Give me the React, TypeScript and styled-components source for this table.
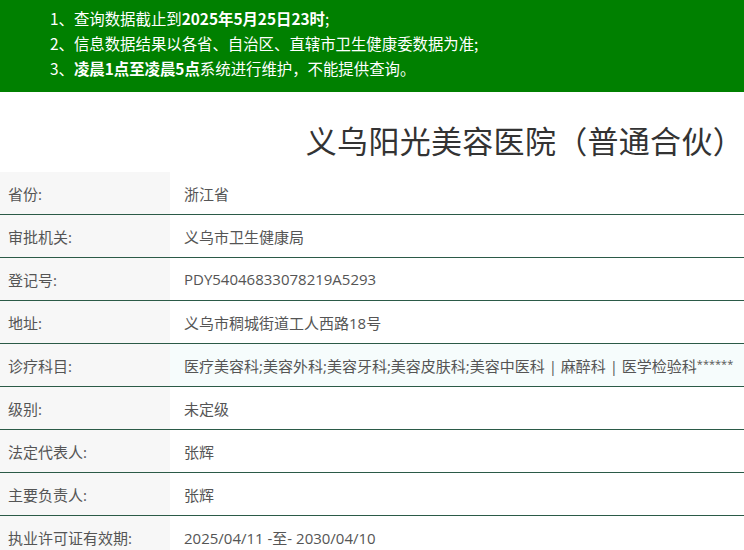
import React from "react";
import styled, { createGlobalStyle } from "styled-components";

const Global = createGlobalStyle`
  html, body { margin: 0; padding: 0; background: #fff; }
  body { font-family: "Open Sans", "Noto Sans CJK SC", sans-serif; }
`;

const Page = styled.div`
  width: 744px;
  height: 550px;
  overflow: hidden;
`;

const Notice = styled.div`
  background: #008000;
  height: 92px;
  box-sizing: border-box;
  padding: 6px 0 0 50px;
  color: #fff;
  font-size: 15.4px;
  line-height: 25px;
  font-family: "Noto Sans CJK SC", sans-serif;
`;

const NoticeLine = styled.div`
  white-space: nowrap;
`;

const Title = styled.h1`
  margin: 0;
  height: 80px;
  box-sizing: border-box;
  padding: 28px 0 0 0;
  text-align: right;
  font-size: 31px;
  font-weight: 400;
  line-height: 40px;
  letter-spacing: 0.3px;
  color: #333;
  font-family: "Noto Sans CJK SC", sans-serif;
`;

const Table = styled.div`
  display: grid;
  grid-template-columns: 170px 1fr;
`;

const Label = styled.div`
  background: #f7f7f7;
  height: 42px;
  border-bottom: 1px solid #2b5a47;
  padding-left: 8px;
  display: flex;
  align-items: center;
  font-size: 15px;
  color: #555;
  font-family: "Open Sans", "Noto Sans CJK SC", sans-serif;
`;

const Value = styled(Label)<{ $tint?: boolean }>`
  background: ${(p) => (p.$tint ? "#f6fcfc" : "#fff")};
  padding-left: 14px;
  white-space: nowrap;
  overflow: hidden;
`;

const Stars = styled.span`
  font-size: 11px;
  position: relative;
  top: -2px;
`;

const rows: { k: string; v: React.ReactNode; tint?: boolean }[] = [
  { k: "省份:", v: "浙江省" },
  { k: "审批机关:", v: "义乌市卫生健康局" },
  { k: "登记号:", v: "PDY54046833078219A5293" },
  { k: "地址:", v: "义乌市稠城街道工人西路18号" },
  {
    k: "诊疗科目:",
    v: (
      <>
        医疗美容科;美容外科;美容牙科;美容皮肤科;美容中医科 | 麻醉科 | 医学检验科<Stars>******</Stars>
      </>
    ),
    tint: true,
  },
  { k: "级别:", v: "未定级" },
  { k: "法定代表人:", v: "张辉" },
  { k: "主要负责人:", v: "张辉" },
  { k: "执业许可证有效期:", v: "2025/04/11 -至- 2030/04/10" },
];

export default function App() {
  return (
    <Page>
      <Global />
      <Notice>
        <NoticeLine>
          1、查询数据截止到<b>2025年5月25日23时</b>;
        </NoticeLine>
        <NoticeLine>2、信息数据结果以各省、自治区、直辖市卫生健康委数据为准;</NoticeLine>
        <NoticeLine>
          3、<b>凌晨1点至凌晨5点</b>系统进行维护，不能提供查询。
        </NoticeLine>
      </Notice>
      <Title>义乌阳光美容医院（普通合伙）</Title>
      <Table>
        {rows.map((r) => (
          <React.Fragment key={r.k}>
            <Label>{r.k}</Label>
            <Value $tint={r.tint}>{r.v}</Value>
          </React.Fragment>
        ))}
      </Table>
    </Page>
  );
}
